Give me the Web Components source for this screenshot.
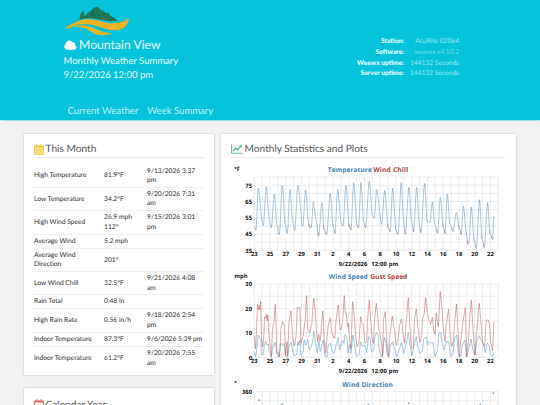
<!DOCTYPE html>
<html lang="en">
<head>
<meta charset="utf-8">
<title>Mountain View</title>
<style>
  html { background: #f2f2f2; }
  body {
    margin: 0;
    height: 405px;
    overflow: hidden;
    font-family: Lato, "Liberation Sans", sans-serif;
    text-rendering: geometricPrecision;
    color: #444;
  }
  main {
    display: grid;
    grid-template-columns: 190px 295px;
    gap: 7px;
    align-items: start;
    box-sizing: border-box;
    height: 285px;
    overflow: hidden;
    padding: 14px 24px 0;
  }
  .left { display: grid; gap: 13.5px; }
</style>
</head>
<body>
  <site-header></site-header>
  <main>
    <div class="left">
      <info-card heading="This Month" icon="calendar" style="--h: 240.5px">
        <stats-table></stats-table>
      </info-card>
      <info-card heading="Calendar Year" icon="calendar-o" style="--h: 30px; --top: 9px"></info-card>
    </div>
    <info-card heading="Monthly Statistics and Plots" icon="chart" style="--h: 285px">
      <plot-chart kind="temp"></plot-chart>
      <plot-chart kind="wind"></plot-chart>
      <plot-chart kind="dir"></plot-chart>
    </info-card>
  </main>

<script>
const render = (el, html) => {
  const template = document.createElement('template');
  template.innerHTML = html;
  el.attachShadow({ mode: 'open' }).appendChild(template.content.cloneNode(true));
};

class SiteHeader extends HTMLElement {
  constructor() {
    super();
    render(this, `
      <style>
        :host {
          display: grid;
          grid-template-columns: 250px 1fr;
          box-sizing: border-box;
          height: 120px;
          padding: 6px 81px 0 63.5px;
          background: #06c2da;
          box-shadow: 0 .5px 1px #9adfe8;
          color: #e4fafd;
          white-space: nowrap;
        }
        .logo { display: block; width: 66px; height: 30px; }
        .name { display: flex; align-items: center; gap: 2.5px; height: 17px; font-size: 12.2px; }
        .line { height: 14.2px; line-height: 14.2px; font-size: 9.5px; }
        nav { display: flex; gap: 9px; padding: 22px 0 0 4px; font-size: 9.55px; line-height: 14px; color: #c3f2f8; }
        dl {
          display: grid;
          grid-template-columns: 1fr 55px;
          grid-auto-rows: 10.8px;
          align-content: start;
          margin: 30px 0 0;
          text-align: right;
          font-size: 6.65px;
          line-height: 10.8px;
        }
        dt { font-weight: 900; color: #eafcff; }
        dd { margin: 0; color: #9be9f3; }
      </style>
      <div>
        <svg class="logo" viewBox="12 12 198 90">
          <path fill="#1f7350" d="M58 53 61 39 65 31 69 25 72 36 75 44 80 36 90 28 98 22 101 17 108 15 112 14 119 20 124 26 128 24 134 31 140 34 145 32 150 40 162 47 174 57 152 58 135 56 110 50 90 48 72 50Z"/>
          <path d="M98 23 90 33 86 42M109 19 105 31 112 38 110 46M119 27 125 36 126 45 134 52M135 38 142 44 150 52" fill="none" stroke="#0e9c9a" stroke-width="1.5"/>
          <g fill="#efb220">
            <path d="M12 80C34 68 48 56 78 52 112 48 129 65 160 64 184 62 198 57 206 46 208 66 195 82 171 84 140 88 116 69 84 68 56 67 35 77 12 80Z"/>
            <path d="M32 77C57 69 77 68 94 75 114 84 126 91 158 94 145 101 110 103 93 89 76 75 57 73 32 77Z"/>
          </g>
          <path d="M36 75C66 63 91 66 116 76 137 84 150 88 171 87" fill="none" stroke="#06c2da" stroke-width="2"/>
        </svg>
        <div class="name">
          <svg width="13" height="10" viewBox="0 0 13 10" fill="#fff"><path d="M3 9.7A3 3 0 0 1 1.8 4.1 3.6 3.6 0 0 1 8.6 2.4 2 2 0 0 1 11 5 2.5 2.5 0 0 1 10.7 9.7Z"/></svg>
          <span>Mountain View</span>
        </div>
        <div class="line" style="margin-top:1.6px">Monthly Weather Summary</div>
        <div class="line">9/22/2026 12:00 pm</div>
        <nav><span>Current Weather</span><span>Week Summary</span></nav>
      </div>
      <dl>
        <dt>Station:</dt><dd>AcuRite 02064</dd>
        <dt>Software:</dt><dd style="opacity:.75">weewx v4.10.2</dd>
        <dt>Weewx uptime:</dt><dd>144132 Seconds</dd>
        <dt>Server uptime:</dt><dd>144132 Seconds</dd>
      </dl>`);
  }
}

const ICONS = {
  calendar: `<svg width="10" height="11" viewBox="0 0 10 11" fill="#fbe6a0" stroke="#f2cb4a">
    <path d="M.5 2h9v8.5h-9z"/><path d="M.5 2.7h9" stroke-width="1.8"/>
    <path d="M2.8.2v2.6M7.2.2v2.6" stroke-width="1.2"/>
    <path d="M.5 5.8h9M.5 8.1h9M2.7 3.5v7M5 3.5v7M7.3 3.5v7" stroke-width=".5"/></svg>`,
  'calendar-o': `<svg width="10" height="11" viewBox="0 0 10 11" fill="none" stroke="#de6c64">
    <path d="M.5 2h9v8.5h-9z"/><path d="M.5 2.7h9" stroke-width="1.6"/>
    <path d="M2.8.2v2.6M7.2.2v2.6" stroke-width="1.2"/></svg>`,
  chart: `<svg width="12" height="10" viewBox="0 0 12 10" fill="none" stroke="#5cc092">
    <path d="M.5.5v8.7h11.2" stroke-width=".9"/><path d="M2 7.2 4.7 4.2 6.4 5.7 9.8 2.2" stroke-width="1.4"/>
    <path d="M8 1.2h3v3z" fill="#5cc092" stroke="none"/></svg>`
};

class InfoCard extends HTMLElement {
  connectedCallback() {
    render(this, `
      <style>
        :host {
          display: block;
          box-sizing: border-box;
          height: var(--h);
          padding: var(--top, 7.5px) 10px 0;
          background: #fff;
          box-shadow: 0 0 2px rgba(0, 0, 0, .22);
        }
        h2 {
          display: flex;
          align-items: center;
          gap: 1.6px;
          height: 15px;
          margin: 0 0 6.5px;
          border-bottom: 1px solid #ececec;
          font-size: 10.12px;
          font-weight: 400;
          color: #555;
          white-space: nowrap;
        }
      </style>
      <h2>${ICONS[this.getAttribute('icon')]}<span>${this.getAttribute('heading')}</span></h2>
      <slot></slot>`);
  }
}

const STATS = [
  ['High Temperature', '81.9°F', '9/13/2026 3:37<br>pm', 23.3],
  ['Low Temperature', '34.2°F', '9/20/2026 7:31<br>am', 23.3],
  ['High Wind Speed', '26.9 mph<br>112°', '9/15/2026 3:01<br>pm', 23.6],
  ['Average Wind', '5.2 mph', '', 14],
  ['Average Wind<br>Direction', '201°', '', 23.3],
  ['Low Wind Chill', '32.5°F', '9/21/2026 4:08<br>am', 23.2],
  ['Rain Total', '0.48 in', '', 14],
  ['High Rain Rate', '0.56 in/h', '9/18/2026 2:54<br>pm', 23.3],
  ['Indoor Temperature', '87.3°F', '9/6/2026 5:39 pm', 14],
  ['Indoor Temperature', '61.2°F', '9/20/2026 7:55<br>am', 23.3]
];

class StatsTable extends HTMLElement {
  constructor() {
    super();
    render(this, `
      <style>
        :host { display: block; padding-top: .7px; font-size: 6.7px; line-height: 9.5px; color: #2c2c2c; white-space: nowrap; }
        .row {
          display: grid;
          grid-template-columns: 70px 43px 1fr;
          align-items: center;
          box-sizing: border-box;
          border-bottom: 1px solid #f0f0f0;
          padding-top: .6px;
        }
        .row:last-child { border: 0; }
      </style>
      ${STATS.map(([a, b, c, h]) => `<div class="row" style="height:${h}px"><span>${a}</span><span>${b}</span><span>${c}</span></div>`).join('')}`);
  }
}

// plot space: 732 x 220, three units per pixel, shifted to the axis origin
const parse = (str, dx, dy) => str.trim().split(/\s+/).map(p => {
  const [x, y] = p.split(',').map(Number);
  return [x + dx, y + dy];
});
const series = (first, second, top) => [...parse(first, -118, -top), ...parse(second, 347, -top)];

const TEMP = series(
  `118,303 123,316 130,189 142,292 145,302 154,184 163,285 169,309 178,207 186,300 193,330 202,181 211,300 217,325
   225,194 234,295 239,317 249,181 263,304 272,195 281,296 283,305 289,307 295,232 304,290 311,333 321,233 327,312 335,329
   346,206 354,300 360,325 368,194 379,295 384,302 393,181 403,305 408,314 416,173 426,300 431,308 438,172
   446,290 452,307 463,169 473,275 478,280 485,194`,
  `35,298 44,197 55,308 61,320 68,189 78,315 84,328 94,173 101,290 106,327 117,187 125,290 131,320 140,187
   148,300 153,322 164,175 172,290 180,293 187,231 195,300 203,324 211,217 220,305 225,325 232,207 240,298
   250,319 259,262 268,310 274,328 280,243 290,330 293,355 297,355 304,246 313,350 319,370 329,224 336,340 343,367
   353,233 360,325 368,343 371,276 374,276`, 156);

const GUST = series(
  `118,212 122,252 128,118 131,135 133,120 135,135 137,110 140,225 143,245 146,222 149,155 152,160 154,148 157,168
   159,150 162,205 166,245 169,275 173,190 177,170 181,118 186,265 190,262 194,275 198,190 203,170 208,180 212,273
   216,230 218,274 222,170 228,137 233,215 238,242 243,215 247,128 255,128 258,235 264,215 270,170 275,92 278,190
   284,203 290,180 296,100 300,130 305,205 308,230 311,208 315,230 324,137 328,230 332,265 337,210 340,180 346,158
   350,200 354,213 359,220 364,160 370,120 376,195 379,190 383,170 388,92 391,140 394,148 398,185 400,175 404,225
   408,250 413,110 418,150 422,215 426,245 432,235 437,155 441,175 445,178 450,235 455,230 458,160 463,105 467,160
   471,220 475,235 479,160 484,115`,
  `28,200 34,230 38,275 41,160 46,140 51,240 55,275 60,210 67,153 73,190 79,240 84,225 89,180 95,162 99,205
   104,235 109,165 115,97 120,190 125,250 130,250 134,160 139,132 144,190 150,232 155,210 158,160 162,150 167,97
   172,145 177,165 182,178 187,157 192,200 195,208 199,145 205,185 211,80 216,130 220,190 225,230 229,175 236,132
   241,220 245,245 250,230 254,170 260,117 264,200 268,275 273,220 279,170 286,128 290,275 295,230 300,150 304,105
   309,190 315,270 320,200 328,115 332,160 338,235 344,245 349,165 355,165 359,180 362,230 368,257 372,170`, 57);

const WIND = series(
  `118,262 122,275 126,250 130,210 137,222 140,268 145,268 148,240 152,228 156,240 160,236 163,262 169,276 173,250
   181,232 185,262 192,276 197,235 203,240 207,235 212,274 218,276 223,240 229,232 234,262 240,274 245,268 249,230
   251,240 254,225 258,270 264,262 268,225 273,240 278,222 283,255 289,245 294,225 296,198 302,235 307,265 312,230
   316,260 325,225 330,272 336,276 340,240 347,235 352,262 358,265 364,238 370,218 374,255 382,225 386,235 391,208
   396,220 399,265 404,240 408,265 414,210 418,235 424,273 432,270 437,230 443,245 450,240 455,262 461,215 466,222
   470,262 476,255 480,215 485,203`,
  `24,210 28,255 34,275 38,270 43,217 48,230 51,265 57,275 62,240 68,230 74,255 81,275 87,255 95,233 101,265
   108,240 115,203 120,240 126,272 133,235 139,215 143,245 150,265 157,260 161,222 169,216 173,240 177,230 184,235
   189,232 195,275 203,255 207,205 212,203 217,235 223,255 229,230 236,230 242,272 248,270 254,220 260,210 266,270
   272,275 278,240 284,225 290,275 297,250 303,222 309,255 315,270 321,225 328,212 333,225 340,235 346,262 352,235
   357,240 362,270 368,275 372,262`, 57);

const BLUE = '#4282b4';
const RED = '#b44242';

const smooth = (pts, k) => pts.map(([x, y], i) => {
  if (!i) return `M${x} ${y}`;
  const [px, py] = pts[i - 1];
  const d = (x - px) * k;
  return `C${px + d} ${py} ${x - d} ${y} ${x} ${y}`;
}).join('');

const line = (pts, color, k = 0.3, width = 1.4) =>
  `<path d="${smooth(pts, k)}" transform="scale(.33333)" fill="none" stroke="${color}" stroke-width="${width}" stroke-linejoin="round"/>`;

// wind chill only parts from the temperature in the cold troughs
const chill = TEMP
  .map(([x, y], i) => [x, y, TEMP[i - 1]])
  .filter(([x, y, prev]) => prev && y > 144 && x > 150)
  .map(([x, y, [px, py]]) => {
    const t = Math.max(0, 1 - 10 / Math.max(10, y - py));
    return `M${px + (x - px) * t} ${py + (y - py) * t}L${x} ${y + 2}`;
  }).join('');

const KINDS = {
  temp: {
    unit: '°F', height: 106, top: 13, bottom: 73.3, step: 8.14,
    titles: [['Temperature', BLUE, 73.5, 44], ['Wind Chill', RED, 119, 35]],
    labels: [['75', 8.3], ['65', 24.5], ['55', 40.8], ['45', 57], ['35', 73.3]],
    body: line(TEMP, BLUE) + `<path d="${chill}" transform="scale(.33333)" fill="none" stroke="#d04a4a" stroke-width="1.5" opacity=".65"/>`
  },
  wind: {
    unit: 'mph', height: 107, top: 14, bottom: 73.3, step: 12.22,
    titles: [['Wind Speed', BLUE, 74.5, 39], ['Gust Speed', RED, 116, 37]],
    labels: [['30', 0], ['20', 24.5], ['10', 49], ['0', 73.3]],
    body: line(WIND, BLUE, 0.15) + line(GUST, RED, 0.15)
  },
  dir: {
    unit: '°', height: 28, top: 14.6, bottom: 18.3, step: 9.16, clipped: true,
    titles: [['Wind Direction', BLUE, 88, 50.5]],
    labels: [['360', 0]],
    body: [[4.7, 8.6], [27.7, 12.6], [114, 12.9], [154.3, 11.5], [226, 12.9], [239, 1.5]]
      .map(([x, y]) => `<circle cx="${x}" cy="${y}" r=".9" fill="${BLUE}" opacity=".75"/>`).join('')
  }
};

const DAYS = [23, 25, 27, 29, 31, 2, 4, 6, 8, 10, 12, 14, 16, 18, 20, 22];

class PlotChart extends HTMLElement {
  connectedCallback() {
    const c = KINDS[this.getAttribute('kind')];
    let grid = '';
    for (let i = 0; i <= 31; i++) grid += `M${i * 7.87} 0V${c.bottom}`;
    for (let y = c.bottom; y > -0.5; y -= c.step) grid += `M0 ${y}H244`;
    const axis = c.clipped ? '' : `
      ${DAYS.map((d, i) => `<text x="${i * 15.74}" y="79.3" text-anchor="middle">${d}</text>`).join('')}
      <text x="84.5" y="88.5" textLength="28.5">9/22/2026</text>
      <text x="117" y="88.5" textLength="27">12:00 pm</text>`;
    render(this, `
      <style>
        :host { display: block; height: ${c.height}px; }
        svg { display: block; overflow: visible; }
        text { font-family: "Open Sans", "Noto Sans", sans-serif; font-weight: 700; font-size: 5.8px; fill: #111; }
        .title { font-size: 6.6px; }
      </style>
      <svg width="275" height="${c.height}">
        <g transform="translate(23.3 ${c.top})">
          <path d="${grid}" stroke="#d8d8d8" stroke-width=".45" fill="none"/>
          ${c.body}
          <text x="-20" y="-6.3">${c.unit}</text>
          ${c.titles.map(([t, color, x, w]) => `<text class="title" x="${x}" y="-5" textLength="${w}" style="fill:${color}">${t}</text>`).join('')}
          ${c.labels.map(([t, y]) => `<text x="-2.3" y="${y + 2.2}" text-anchor="end">${t}</text>`).join('')}
          ${axis}
        </g>
      </svg>`);
  }
}

customElements.define('site-header', SiteHeader);
customElements.define('info-card', InfoCard);
customElements.define('stats-table', StatsTable);
customElements.define('plot-chart', PlotChart);
</script>
</body>
</html>
